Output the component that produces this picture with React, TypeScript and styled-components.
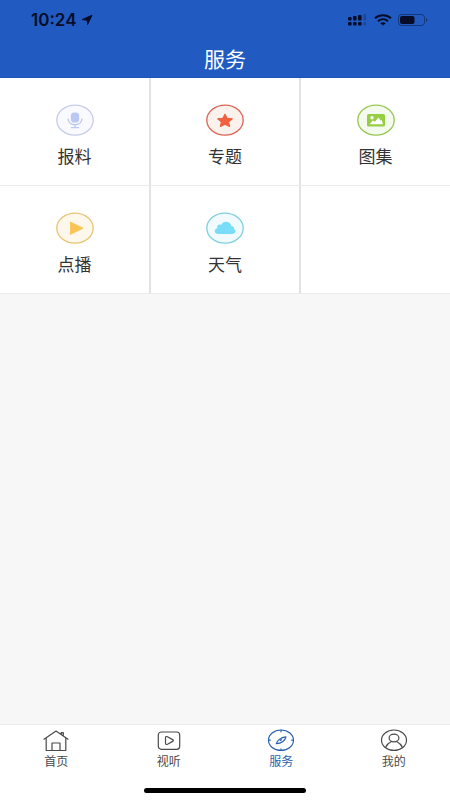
import React from "react";
import styled, { createGlobalStyle } from "styled-components";

const GlobalStyle = createGlobalStyle`
  *, *::before, *::after { box-sizing: border-box; }
  body {
    margin: 0;
    background: #f7f7f7;
    font-family: "Noto Sans CJK SC", "Noto Sans", sans-serif;
  }
  button { font: inherit; border: 0; padding: 0; background: none; cursor: pointer; }
  svg { display: block; }
`;

const Screen = styled.div`
  display: flex;
  flex-direction: column;
  min-height: 100vh;
`;

const Header = styled.header`
  background: #215bc1;
  height: 78px;
  border-bottom: 1px solid #1e55b6;
`;

const StatusBar = styled.div`
  display: flex;
  align-items: center;
  justify-content: space-between;
  height: 40px;
  padding: 0 22px 0 31px;
  color: #070d28;
`;

const StatusGroup = styled.div<{ $gap: number }>`
  display: flex;
  align-items: center;
  gap: ${(p) => p.$gap}px;
`;

const Clock = styled.time`
  font-family: Inter, sans-serif;
  font-size: 17px;
  font-weight: 600;
  line-height: 20px;
`;

const Title = styled.h1`
  margin: 0;
  color: #fff;
  font-size: 21px;
  font-weight: 400;
  line-height: 36px;
  text-align: center;
`;

const Main = styled.main`
  flex: 1;
`;

const ServiceGrid = styled.div`
  display: grid;
  grid-template-columns: repeat(3, 1fr);
  grid-auto-rows: 108px;
  background: #fff;
`;

const Cell = styled.div`
  display: flex;
  border: 0 solid #e3e3e5;
  border-bottom: 1px solid #ebebeb;

  &:not(:nth-child(3n)) {
    border-right-width: 1px;
  }

  &:not(:nth-child(3n + 1)) {
    border-left-width: 1px;
  }
`;

const ServiceButton = styled.button`
  flex: 1;
  display: flex;
  flex-direction: column;
  align-items: center;
  gap: 7px;
  padding-top: 26px;
  color: #333;
  font-size: 17px;
  line-height: 26px;
`;

const TabBar = styled.nav`
  display: grid;
  grid-template-columns: repeat(4, 1fr);
  background: #fff;
  border-top: 1px solid #ebebeb;
  padding-top: 4px;
`;

const Tab = styled.button<{ $active?: boolean }>`
  display: flex;
  flex-direction: column;
  align-items: center;
  color: ${(p) => (p.$active ? "#2a5fae" : "#4a4a4a")};
  font-size: 12px;
  line-height: 16px;
`;

const HomeArea = styled.footer`
  display: flex;
  justify-content: center;
  background: #fff;
  height: 31px;
  padding-top: 19px;
`;

const HomeIndicator = styled.div`
  width: 36%;
  height: 5px;
  border-radius: 3px;
  background: #000;
`;

const LocationIcon = () => (
  <svg width="12" height="12" viewBox="0 0 12 12" aria-hidden="true">
    <path
      d="M11 1.2 1.2 5.6l5 .6.4 4.2z"
      fill="currentColor"
      stroke="currentColor"
      strokeWidth="1"
      strokeLinejoin="round"
    />
  </svg>
);

const SignalIcon = () => (
  <svg width="20" height="12" viewBox="0 0 20 12" fill="currentColor" aria-hidden="true">
    <rect x="0" y="3" width="3.6" height="3.4" rx="1" />
    <rect x="5" y="2" width="3.6" height="4.4" rx="1" />
    <rect x="10" y="1" width="3.6" height="5.4" rx="1" />
    <rect x="15.5" y="0" width="2.6" height="6.4" rx="1" opacity="0.25" />
    <rect x="0" y="8" width="3.6" height="3.4" rx="1" />
    <rect x="5" y="8" width="3.6" height="3.4" rx="1" />
    <rect x="10" y="8" width="3.6" height="3.4" rx="1" />
    <rect x="15.5" y="8" width="2.6" height="3.4" rx="1" opacity="0.25" />
  </svg>
);

const WifiIcon = () => (
  <svg width="18" height="12" viewBox="0 0 18 12" fill="none" stroke="currentColor" strokeWidth="2" aria-hidden="true">
    <path d="M1 4.3C5.7.2 12.3.2 17 4.3" />
    <path d="M4 7.2c2.9-2.6 7.1-2.6 10 0" />
    <path d="M9 11.5 6.2 9.3c1.6-1.3 4-1.3 5.6 0z" fill="currentColor" stroke="none" />
  </svg>
);

const BatteryIcon = () => (
  <svg width="30" height="12" viewBox="0 0 30 12" aria-hidden="true">
    <rect x="0.5" y="0.5" width="26" height="11" rx="3" fill="none" stroke="currentColor" opacity="0.45" />
    <rect x="2" y="2" width="14.5" height="8" rx="2" fill="currentColor" />
    <path d="M28 4c1.8.4 1.8 3.6 0 4z" fill="currentColor" opacity="0.5" />
  </svg>
);

const Badge = ({ ring, fill, children }: { ring: string; fill: string; children: React.ReactNode }) => (
  <svg width="38" height="32" viewBox="0 0 38 32" aria-hidden="true">
    <ellipse cx="19" cy="16.2" rx="18.2" ry="15" fill={fill} stroke={ring} strokeWidth="1.3" />
    {children}
  </svg>
);

const services = [
  {
    label: "报料",
    icon: (
      <Badge ring="#c5cce9" fill="#f8faff">
        <rect x="14.8" y="8.5" width="8.4" height="10" rx="3.6" fill="#bbc8f1" />
        <path d="M12 14.5c0 8.3 14 8.3 14 0M19 20.5v3M15 23.7h8" fill="none" stroke="#bbc8f1" strokeWidth="1.3" />
      </Badge>
    ),
  },
  {
    label: "专题",
    icon: (
      <Badge ring="#dd6453" fill="#fbf2ee">
        <path
          d="m19 10.2 2.1 4.1 5.2.5-3.7 3.1 1 4.5-4.6-2.1-4.6 2.1 1-4.5-3.7-3.1 5.2-.5z"
          fill="#f1603f"
          stroke="#f1603f"
          strokeWidth="1.2"
          strokeLinejoin="round"
        />
      </Badge>
    ),
  },
  {
    label: "图集",
    icon: (
      <Badge ring="#94c84f" fill="#f5faee">
        <rect x="10" y="10" width="18" height="12.5" rx="1.5" fill="#94cf43" />
        <circle cx="15" cy="13.8" r="1.7" fill="#fff" />
        <path d="m12.5 20.3 3.3-3.8 2.1 1.3 3.5-4.3 2.2 3 1.1-.6 1.3 4.4z" fill="#fff" />
      </Badge>
    ),
  },
  {
    label: "点播",
    icon: (
      <Badge ring="#e8c473" fill="#fdf7ec">
        <path d="m14.5 10 12.5 6.2-12.5 6.2z" fill="#fac453" stroke="#fac453" strokeWidth="0.8" strokeLinejoin="round" />
      </Badge>
    ),
  },
  {
    label: "天气",
    icon: (
      <Badge ring="#7dcfdd" fill="#f1fbfe">
        <path
          d="M12.5 22c-5.2-.3-4.5-5.4-1-5.8-1.2-3 1.6-4.3 3.6-3.3 2.4-4.8 9.5-3.5 10 1 2.5.1 3.3 1.3 2.8 2.9 3 1.6 1.4 5-1.4 5.2z"
          fill="#79dcf8"
        />
      </Badge>
    ),
  },
];

const TabIcon = ({ children }: { children: React.ReactNode }) => (
  <svg
    width="28"
    height="24"
    viewBox="0 0 28 24"
    fill="none"
    stroke="currentColor"
    strokeWidth="1.2"
    strokeLinecap="round"
    strokeLinejoin="round"
    aria-hidden="true"
  >
    {children}
  </svg>
);

const tabs = [
  {
    label: "首页",
    icon: (
      <TabIcon>
        <path d="M2 10.2 14 2l12 8.2M4.2 9.2v12.3h19.6V9.2M19.3 5.2V3.6h2v3.2M10 21.3v-7.3h8v7.3" />
      </TabIcon>
    ),
  },
  {
    label: "视听",
    icon: (
      <TabIcon>
        <rect x="3.3" y="3" width="21.4" height="17.3" rx="3" />
        <path d="M10.5 8.9c0-1.3.8-1.7 2-1.1l5.1 2.8c1 .5 1 1.2 0 1.8l-5.1 2.8c-1.2.6-2 .2-2-1.1z" />
      </TabIcon>
    ),
  },
  {
    label: "服务",
    active: true,
    icon: (
      <TabIcon>
        <ellipse cx="14" cy="11.2" rx="12.5" ry="10.2" />
        <path d="M14 1.2v1.6M14 19.8v1.6M1.5 11.2h1.8M24.7 11.2h1.8M9.3 14.7c.6-2.8 4.3-6.4 9.6-6.8-.7 3.3-4.1 6.8-9.6 6.8zM13.3 11.5l1.2-.8" />
      </TabIcon>
    ),
  },
  {
    label: "我的",
    icon: (
      <TabIcon>
        <ellipse cx="14" cy="11.2" rx="12.5" ry="10.2" />
        <ellipse cx="14" cy="9" rx="4.9" ry="3.9" />
        <path d="M5.5 18.4c1.5-3 3.6-4.8 5.9-5.9M16.6 12.5c2.3 1.1 4.4 2.9 5.9 5.9" />
      </TabIcon>
    ),
  },
];

export default function App() {
  return (
    <Screen>
      <GlobalStyle />
      <Header>
        <StatusBar>
          <StatusGroup $gap={5}>
            <Clock>10:24</Clock>
            <LocationIcon />
          </StatusGroup>
          <StatusGroup $gap={6}>
            <SignalIcon />
            <WifiIcon />
            <BatteryIcon />
          </StatusGroup>
        </StatusBar>
        <Title>服务</Title>
      </Header>
      <Main>
        <ServiceGrid>
          {services.map((s) => (
            <Cell key={s.label}>
              <ServiceButton type="button">
                {s.icon}
                {s.label}
              </ServiceButton>
            </Cell>
          ))}
          <Cell />
        </ServiceGrid>
      </Main>
      <TabBar>
        {tabs.map((t) => (
          <Tab key={t.label} type="button" $active={t.active} aria-current={t.active ? "page" : undefined}>
            {t.icon}
            {t.label}
          </Tab>
        ))}
      </TabBar>
      <HomeArea>
        <HomeIndicator />
      </HomeArea>
    </Screen>
  );
}
